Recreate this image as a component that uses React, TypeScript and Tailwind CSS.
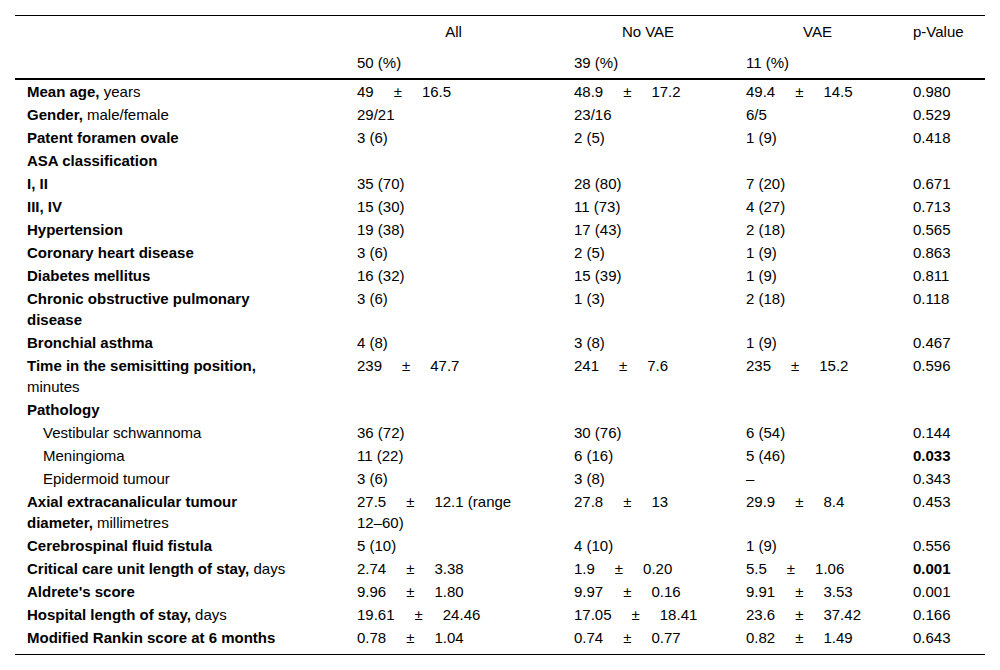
import React from "react";

type Val = string | [string, string, string?] | { b: string };

interface Row {
  label: string;
  rest?: string;
  indent?: boolean;
  values?: Val[];
}

const COLS = "grid grid-cols-[330px_217px_172px_167px_84px]";

const rows: Row[] = [
  { label: "Mean age,", rest: " years", values: [["49", "16.5"], ["48.9", "17.2"], ["49.4", "14.5"], "0.980"] },
  { label: "Gender,", rest: " male/female", values: ["29/21", "23/16", "6/5", "0.529"] },
  { label: "Patent foramen ovale", values: ["3 (6)", "2 (5)", "1 (9)", "0.418"] },
  { label: "ASA classification" },
  { label: "I, II", values: ["35 (70)", "28 (80)", "7 (20)", "0.671"] },
  { label: "III, IV", values: ["15 (30)", "11 (73)", "4 (27)", "0.713"] },
  { label: "Hypertension", values: ["19 (38)", "17 (43)", "2 (18)", "0.565"] },
  { label: "Coronary heart disease", values: ["3 (6)", "2 (5)", "1 (9)", "0.863"] },
  { label: "Diabetes mellitus", values: ["16 (32)", "15 (39)", "1 (9)", "0.811"] },
  { label: "Chronic obstructive pulmonary disease", values: ["3 (6)", "1 (3)", "2 (18)", "0.118"] },
  { label: "Bronchial asthma", values: ["4 (8)", "3 (8)", "1 (9)", "0.467"] },
  { label: "Time in the semisitting position,", rest: " minutes", values: [["239", "47.7"], ["241", "7.6"], ["235", "15.2"], "0.596"] },
  { label: "Pathology" },
  { label: "Vestibular schwannoma", indent: true, values: ["36 (72)", "30 (76)", "6 (54)", "0.144"] },
  { label: "Meningioma", indent: true, values: ["11 (22)", "6 (16)", "5 (46)", { b: "0.033" }] },
  { label: "Epidermoid tumour", indent: true, values: ["3 (6)", "3 (8)", "–", "0.343"] },
  { label: "Axial extracanalicular tumour diameter,", rest: " millimetres", values: [["27.5", "12.1 (range ", "12–60)"], ["27.8", "13"], ["29.9", "8.4"], "0.453"] },
  { label: "Cerebrospinal fluid fistula", values: ["5 (10)", "4 (10)", "1 (9)", "0.556"] },
  { label: "Critical care unit length of stay,", rest: " days", values: [["2.74", "3.38"], ["1.9", "0.20"], ["5.5", "1.06"], { b: "0.001" }] },
  { label: "Aldrete's score", values: [["9.96", "1.80"], ["9.97", "0.16"], ["9.91", "3.53"], "0.001"] },
  { label: "Hospital length of stay,", rest: " days", values: [["19.61", "24.46"], ["17.05", "18.41"], ["23.6", "37.42"], "0.166"] },
  { label: "Modified Rankin score at 6 months", values: [["0.78", "1.04"], ["0.74", "0.77"], ["0.82", "1.49"], "0.643"] },
];

function Cell({ v }: { v: Val }) {
  if (Array.isArray(v)) {
    return (
      <>
        {v[0]}
        <span className="mx-[20px]">±</span>
        {v[1]}
        {v[2] && <span className="whitespace-nowrap">{v[2]}</span>}
      </>
    );
  }
  if (typeof v === "object") return <span className="font-bold">{v.b}</span>;
  return <>{v}</>;
}

export default function App() {
  return (
    <div
      className="w-[1000px] h-[670px] bg-white text-black text-[15px] pt-[15px] px-[15px]"
      style={{ fontFamily: '"Liberation Sans", Arial, sans-serif' }}
    >
      <div className="border-t border-black">
        {/* header */}
        <div className={`${COLS} h-[32px] items-center`}>
          <div />
          <div className="text-center">All</div>
          <div className="text-center">No VAE</div>
          <div className="text-center">VAE</div>
          <div className="pl-3">p-Value</div>
        </div>
        <div className={`${COLS} h-[30px] items-center`}>
          <div />
          <div className="pl-3">50 (%)</div>
          <div className="pl-3">39 (%)</div>
          <div className="pl-3">11 (%)</div>
          <div />
        </div>
        <div className="border-t-2 border-black pb-[5px]">
          {rows.map((r, i) => (
            <div key={i} className={`${COLS} py-px leading-[21px]`}>
              <div className={r.indent ? "pl-[28px] pr-[48px]" : "pl-3 pr-[48px] font-bold"}>
                {r.label}
                {r.rest && <span className="font-normal">{r.rest}</span>}
              </div>
              {(r.values ?? ["", "", "", ""]).map((v, ci) => (
                <div key={ci} className="pl-3 pr-3">
                  <Cell v={v} />
                </div>
              ))}
            </div>
          ))}
        </div>
        <div className="border-t border-black" />
      </div>
    </div>
  );
}
